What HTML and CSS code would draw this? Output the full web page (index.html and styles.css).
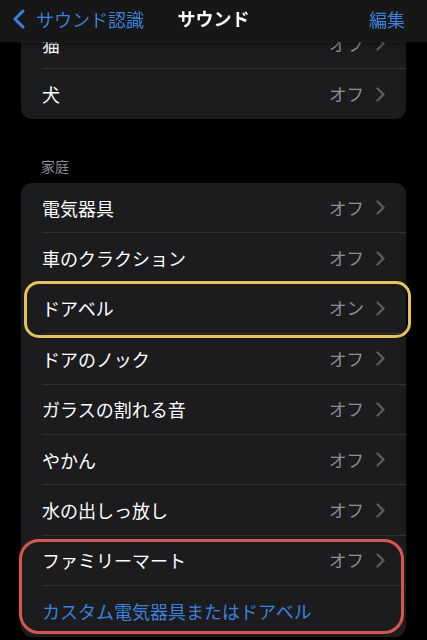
FILE: index.html
```html
<!DOCTYPE html>
<html lang="ja">
<head>
<meta charset="utf-8">
<title>サウンド</title>
<link rel="stylesheet" href="styles.css">
</head>
<body>
<header class="nav">
  <a class="nav-back">
    <svg class="back-chevron" width="16" height="20" viewBox="0 0 16 20"><path d="M12 2 L4 10 L12 18" fill="none" stroke="#3a82dc" stroke-width="3" stroke-linecap="round" stroke-linejoin="round"/></svg>
    <span>サウンド認識</span>
  </a>
  <h1 class="nav-title">サウンド</h1>
  <a class="nav-edit">編集</a>
</header>
<main class="content">
  <section class="card">
    <div class="row"><div class="row-inner"><span class="label">猫</span><span class="value">オフ</span><svg class="chev" width="9" height="15" viewBox="0 0 9 15"><path d="M1.5 1.5 L7.5 7.5 L1.5 13.5" fill="none" stroke="#5c5c60" stroke-width="2.4" stroke-linecap="round" stroke-linejoin="round"/></svg></div></div>
    <div class="row"><div class="row-inner last"><span class="label">犬</span><span class="value">オフ</span><svg class="chev" width="9" height="15" viewBox="0 0 9 15"><path d="M1.5 1.5 L7.5 7.5 L1.5 13.5" fill="none" stroke="#5c5c60" stroke-width="2.4" stroke-linecap="round" stroke-linejoin="round"/></svg></div></div>
  </section>
  <h2 class="section-header">家庭</h2>
  <section class="card card-home">
    <div class="row"><div class="row-inner"><span class="label">電気器具</span><span class="value">オフ</span><svg class="chev" width="9" height="15" viewBox="0 0 9 15"><path d="M1.5 1.5 L7.5 7.5 L1.5 13.5" fill="none" stroke="#5c5c60" stroke-width="2.4" stroke-linecap="round" stroke-linejoin="round"/></svg></div></div>
    <div class="row"><div class="row-inner"><span class="label">車のクラクション</span><span class="value">オフ</span><svg class="chev" width="9" height="15" viewBox="0 0 9 15"><path d="M1.5 1.5 L7.5 7.5 L1.5 13.5" fill="none" stroke="#5c5c60" stroke-width="2.4" stroke-linecap="round" stroke-linejoin="round"/></svg></div></div>
    <div class="row"><div class="row-inner"><span class="label">ドアベル</span><span class="value">オン</span><svg class="chev" width="9" height="15" viewBox="0 0 9 15"><path d="M1.5 1.5 L7.5 7.5 L1.5 13.5" fill="none" stroke="#5c5c60" stroke-width="2.4" stroke-linecap="round" stroke-linejoin="round"/></svg></div></div>
    <div class="row"><div class="row-inner"><span class="label">ドアのノック</span><span class="value">オフ</span><svg class="chev" width="9" height="15" viewBox="0 0 9 15"><path d="M1.5 1.5 L7.5 7.5 L1.5 13.5" fill="none" stroke="#5c5c60" stroke-width="2.4" stroke-linecap="round" stroke-linejoin="round"/></svg></div></div>
    <div class="row"><div class="row-inner"><span class="label">ガラスの割れる音</span><span class="value">オフ</span><svg class="chev" width="9" height="15" viewBox="0 0 9 15"><path d="M1.5 1.5 L7.5 7.5 L1.5 13.5" fill="none" stroke="#5c5c60" stroke-width="2.4" stroke-linecap="round" stroke-linejoin="round"/></svg></div></div>
    <div class="row"><div class="row-inner"><span class="label">やかん</span><span class="value">オフ</span><svg class="chev" width="9" height="15" viewBox="0 0 9 15"><path d="M1.5 1.5 L7.5 7.5 L1.5 13.5" fill="none" stroke="#5c5c60" stroke-width="2.4" stroke-linecap="round" stroke-linejoin="round"/></svg></div></div>
    <div class="row"><div class="row-inner"><span class="label">水の出しっ放し</span><span class="value">オフ</span><svg class="chev" width="9" height="15" viewBox="0 0 9 15"><path d="M1.5 1.5 L7.5 7.5 L1.5 13.5" fill="none" stroke="#5c5c60" stroke-width="2.4" stroke-linecap="round" stroke-linejoin="round"/></svg></div></div>
    <div class="row"><div class="row-inner"><span class="label">ファミリーマート</span><span class="value">オフ</span><svg class="chev" width="9" height="15" viewBox="0 0 9 15"><path d="M1.5 1.5 L7.5 7.5 L1.5 13.5" fill="none" stroke="#5c5c60" stroke-width="2.4" stroke-linecap="round" stroke-linejoin="round"/></svg></div></div>
    <div class="row"><div class="row-inner last"><span class="label link">カスタム電気器具またはドアベル</span></div></div>
    <div class="ring ring-yellow"></div>
    <div class="ring ring-red"></div>
  </section>
</main>
</body>
</html>
```

FILE: styles.css
```css
* { box-sizing: border-box; }
html, body {
  margin: 0;
  padding: 0;
  background: #000;
  color: #fff;
  font-family: "Noto Sans CJK JP", "Noto Sans", sans-serif;
}
body { width: 427px; height: 640px; overflow: hidden; }

.nav {
  position: fixed;
  top: 0;
  left: 0;
  right: 0;
  height: 42px;
  z-index: 10;
  background: #171717;
  box-shadow: 0 0.5px 0 rgba(255,255,255,0.06), 0 2px 6px rgba(0,0,0,0.4);
  display: flex;
  align-items: center;
  padding: 0 22px 4px 11px;
}
.nav-back {
  display: flex;
  align-items: center;
  gap: 9px;
  color: #3a82dc;
  font-size: 18px;
  line-height: 24px;
  flex: 1;
}
.back-chevron { flex: none; }
.nav-title {
  position: absolute;
  left: 0;
  right: 0;
  top: 0;
  height: 42px;
  margin: 0;
  text-align: center;
  font-size: 18px;
  line-height: 36px;
  font-weight: 700;
  pointer-events: none;
}
.nav-edit {
  color: #3a82dc;
  font-size: 18px;
  line-height: 24px;
}

.content {
  padding: 19px 21px 0;
}

.card {
  background: #1c1c1e;
  border-radius: 11px;
  position: relative;
}
.row {
  height: 50.4px;
  padding-left: 21px;
  display: flex;
}
.card:first-child .row { height: 50px; }
.row-inner {
  flex: 1;
  display: flex;
  align-items: center;
  border-bottom: 1px solid #323234;
  padding-right: 21px;
}
.row-inner.last { border-bottom: none; }
.label {
  flex: 1;
  font-size: 18px;
  line-height: 24px;
  color: #fff;
}
.label.link { color: #3a82dc; }
.value {
  font-size: 17.5px;
  line-height: 24px;
  color: #8e8e93;
  margin-right: 12px;
}
.chev { flex: none; }

.section-header {
  margin: 37px 0 7px;
  padding-left: 20px;
  font-size: 14px;
  line-height: 20px;
  font-weight: 400;
  color: #8d8d92;
}

.ring {
  position: absolute;
  border-style: solid;
  border-width: 3px;
  pointer-events: none;
}
.ring-yellow {
  left: 3px;
  top: 98px;
  width: 387px;
  height: 57px;
  border-color: #e6c25a;
  border-radius: 15px;
  box-shadow: 0 0 2px rgba(0,0,0,0.8);
}
.ring-red {
  left: -2px;
  top: 356px;
  width: 385px;
  height: 95px;
  border-color: #d6574f;
  border-radius: 20px;
}
```
